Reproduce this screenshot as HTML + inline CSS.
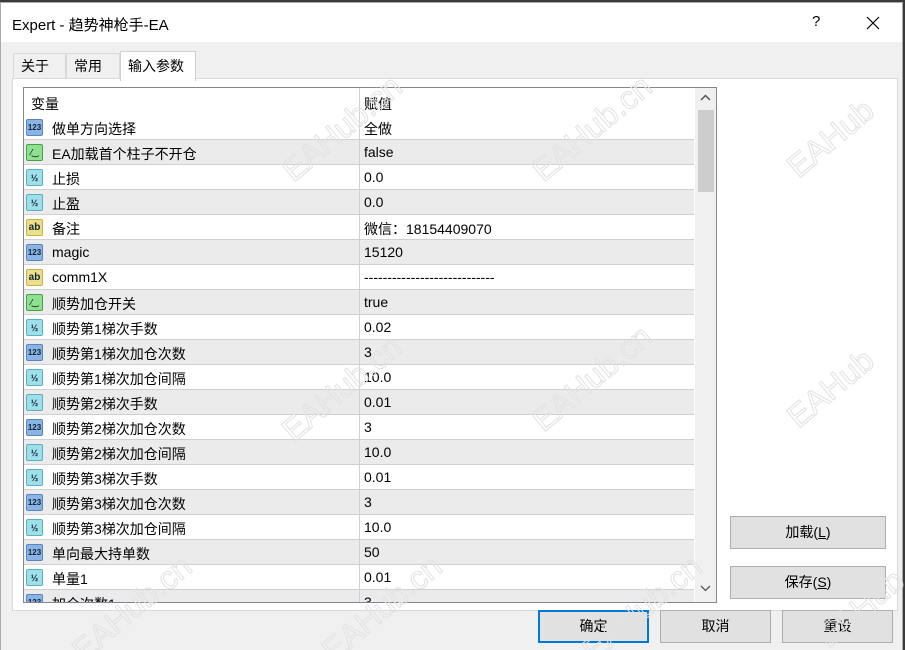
<!DOCTYPE html>
<html><head><meta charset="utf-8"><style>
*{box-sizing:border-box;margin:0;padding:0}
html,body{width:905px;height:650px;overflow:hidden}
body{background:#3a3a3a;font-family:"Liberation Sans","Noto Sans CJK SC",sans-serif;font-size:14px;color:#000;position:relative}
.win{position:absolute;left:0;top:2px;width:903px;height:648px;background:#f0f0f0;border:1px solid #aaa;border-bottom:none}
.title{position:absolute;left:0;top:0;width:901px;height:39px;background:#fff}
.title .t{position:absolute;left:11px;top:11px;font-size:15px}
.title .q{position:absolute;left:811px;top:10px;font-size:15px}
.tab{position:absolute;top:50px;height:26px;border:1px solid #d9d9d9;border-bottom:none;background:#f0f0f0;font-size:14px;padding:2px 0 0 7px}
.tab.sel{top:48px;height:30px;background:#fff;border-color:#d0d0d0;z-index:2;padding-top:4px}
.panel{position:absolute;left:11px;top:75px;width:886px;height:533px;background:#fff;border:1px solid #d9d9d9}
.grid{position:absolute;left:23px;top:87px;width:694px;height:516px;border:1px solid #828790;background:#fff;overflow:hidden}
.row{position:absolute;left:0;width:670px;height:25px;border-bottom:1px solid #d0d0d0}
.row.g{background:#ebebeb}
.row .n{position:absolute;left:28px;top:4px}
.row .v{position:absolute;left:340px;top:4px}
.row .d{position:absolute;left:335px;top:0;width:1px;height:25px;background:#d0d0d0}
.ic{position:absolute;left:2px;top:4px;width:17px;height:17px;border-radius:2px;font:bold 8px "Liberation Sans",sans-serif;text-align:center;line-height:16px;color:#123}
.b{background:#8ab4e6;border:1px solid #5a86c0}
.h{background:#9ee0ea;border:1px solid #5bb0c0;font-size:9px}
.a{background:#ecdf8a;border:1px solid #c4b24a;font-size:10px}
.s{background:#8fe08f;border:1px solid #4aa04a}
.sb{position:absolute;left:671px;top:0;width:21px;height:515px;background:#f0f0f0}
.thumb{position:absolute;left:3px;top:22px;width:16px;height:82px;background:#cdcdcd}
.btn{position:absolute;height:33px;background:#e1e1e1;border:1px solid #adadad;text-align:center;line-height:31px;font-size:14px}
.wm{position:absolute;font:32px "Liberation Sans",sans-serif;color:transparent;-webkit-text-stroke:1px #e2e2e2;transform:rotate(-40deg);white-space:nowrap;z-index:5;pointer-events:none}
</style></head><body>
<div class="win">
<div class="title"><span class="t">Expert - 趋势神枪手-EA</span><span class="q">?</span>
<svg style="position:absolute;left:865px;top:13px" width="14" height="14"><path d="M1 1L13 13M13 1L1 13" stroke="#000" stroke-width="1.2"/></svg></div>
<div class="tab" style="left:12px;width:53px">关于</div>
<div class="tab" style="left:65px;width:54px">常用</div>
<div class="tab sel" style="left:119px;width:76px">输入参数</div>
<div class="panel"></div>
</div>
<div class="grid">
<div class="row" style="top:0;border-bottom:none"><span class="n" style="left:7px;top:6px">变量</span><span class="v" style="top:6px">赋值</span><div class="d" style="height:27px"></div></div>
<div class="row" style="top:27px"><div class="ic b">123</div><span class="n">做单方向选择</span><div class="d"></div><span class="v">全做</span></div>
<div class="row g" style="top:52px"><div class="ic s">⁄‿</div><span class="n">EA加载首个柱子不开仓</span><div class="d"></div><span class="v">false</span></div>
<div class="row" style="top:77px"><div class="ic h">½</div><span class="n">止损</span><div class="d"></div><span class="v">0.0</span></div>
<div class="row g" style="top:102px"><div class="ic h">½</div><span class="n">止盈</span><div class="d"></div><span class="v">0.0</span></div>
<div class="row" style="top:127px"><div class="ic a">ab</div><span class="n">备注</span><div class="d"></div><span class="v">微信：18154409070</span></div>
<div class="row g" style="top:152px"><div class="ic b">123</div><span class="n">magic</span><div class="d"></div><span class="v">15120</span></div>
<div class="row" style="top:177px"><div class="ic a">ab</div><span class="n">comm1X</span><div class="d"></div><span class="v">----------------------------</span></div>
<div class="row g" style="top:202px"><div class="ic s">⁄‿</div><span class="n">顺势加仓开关</span><div class="d"></div><span class="v">true</span></div>
<div class="row" style="top:227px"><div class="ic h">½</div><span class="n">顺势第1梯次手数</span><div class="d"></div><span class="v">0.02</span></div>
<div class="row g" style="top:252px"><div class="ic b">123</div><span class="n">顺势第1梯次加仓次数</span><div class="d"></div><span class="v">3</span></div>
<div class="row" style="top:277px"><div class="ic h">½</div><span class="n">顺势第1梯次加仓间隔</span><div class="d"></div><span class="v">10.0</span></div>
<div class="row g" style="top:302px"><div class="ic h">½</div><span class="n">顺势第2梯次手数</span><div class="d"></div><span class="v">0.01</span></div>
<div class="row" style="top:327px"><div class="ic b">123</div><span class="n">顺势第2梯次加仓次数</span><div class="d"></div><span class="v">3</span></div>
<div class="row g" style="top:352px"><div class="ic h">½</div><span class="n">顺势第2梯次加仓间隔</span><div class="d"></div><span class="v">10.0</span></div>
<div class="row" style="top:377px"><div class="ic h">½</div><span class="n">顺势第3梯次手数</span><div class="d"></div><span class="v">0.01</span></div>
<div class="row g" style="top:402px"><div class="ic b">123</div><span class="n">顺势第3梯次加仓次数</span><div class="d"></div><span class="v">3</span></div>
<div class="row" style="top:427px"><div class="ic h">½</div><span class="n">顺势第3梯次加仓间隔</span><div class="d"></div><span class="v">10.0</span></div>
<div class="row g" style="top:452px"><div class="ic b">123</div><span class="n">单向最大持单数</span><div class="d"></div><span class="v">50</span></div>
<div class="row" style="top:477px"><div class="ic h">½</div><span class="n">单量1</span><div class="d"></div><span class="v">0.01</span></div>
<div class="row g" style="top:502px"><div class="ic b">123</div><span class="n">加仓次数1</span><div class="d"></div><span class="v">3</span></div>
<div class="sb"><svg style="position:absolute;left:5px;top:6px" width="11" height="7"><path d="M1 6L5.5 1.5L10 6" stroke="#555" stroke-width="1.5" fill="none"/></svg><div class="thumb"></div>
<svg style="position:absolute;left:5px;top:497px" width="11" height="7"><path d="M1 1L5.5 5.5L10 1" stroke="#555" stroke-width="1.3" fill="none"/></svg></div>
</div>
<div class="btn" style="left:730px;top:516px;width:156px">加载(<u>L</u>)</div>
<div class="btn" style="left:730px;top:566px;width:156px">保存(<u>S</u>)</div>
<div class="btn" style="left:538px;top:610px;width:111px;border:2px solid #0078d7;line-height:29px">确定</div>
<div class="btn" style="left:660px;top:610px;width:111px">取消</div>
<div class="btn" style="left:782px;top:610px;width:111px">重设</div>
<div class="wm" style="left:270px;top:110px">EAHub.cn</div>
<div class="wm" style="left:520px;top:110px">EAHub.cn</div>
<div class="wm" style="left:780px;top:120px">EAHub</div>
<div class="wm" style="left:270px;top:370px">EAHub.cn</div>
<div class="wm" style="left:520px;top:360px">EAHub.cn</div>
<div class="wm" style="left:780px;top:370px">EAHub</div>
<div class="wm" style="left:60px;top:590px">EAHub.cn</div>
<div class="wm" style="left:310px;top:590px">EAHub.cn</div>
<div class="wm" style="left:570px;top:590px">EAHub.cn</div>
<div class="wm" style="left:810px;top:590px">EAHub</div>
</body></html>
